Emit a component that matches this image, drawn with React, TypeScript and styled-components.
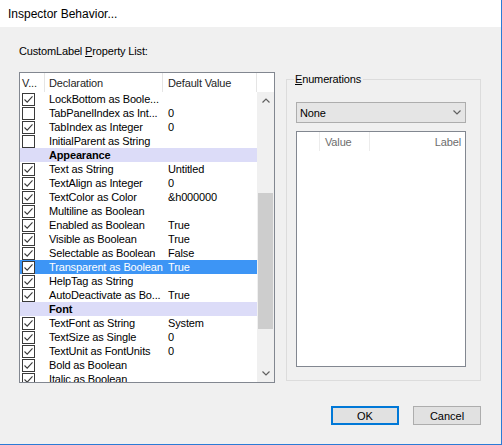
import styled, { createGlobalStyle } from "styled-components";

const GlobalStyle = createGlobalStyle`
  html, body {
    margin: 0;
    padding: 0;
    background: #f0f0f0;
  }
  * {
    box-sizing: border-box;
  }
`;

type Item = {
  kind: "item";
  checked: boolean;
  decl: string;
  value?: string;
  selected?: boolean;
};
type Section = { kind: "section"; title: string };
type Row = Item | Section;

const rows: Row[] = [
  { kind: "item", checked: true, decl: "LockBottom as Boole..." },
  { kind: "item", checked: false, decl: "TabPanelIndex as Int...", value: "0" },
  { kind: "item", checked: true, decl: "TabIndex as Integer", value: "0" },
  { kind: "item", checked: false, decl: "InitialParent as String" },
  { kind: "section", title: "Appearance" },
  { kind: "item", checked: true, decl: "Text as String", value: "Untitled" },
  { kind: "item", checked: true, decl: "TextAlign as Integer", value: "0" },
  { kind: "item", checked: true, decl: "TextColor as Color", value: "&h000000" },
  { kind: "item", checked: true, decl: "Multiline as Boolean" },
  { kind: "item", checked: true, decl: "Enabled as Boolean", value: "True" },
  { kind: "item", checked: true, decl: "Visible as Boolean", value: "True" },
  { kind: "item", checked: true, decl: "Selectable as Boolean", value: "False" },
  { kind: "item", checked: true, decl: "Transparent as Boolean", value: "True", selected: true },
  { kind: "item", checked: true, decl: "HelpTag as String" },
  { kind: "item", checked: true, decl: "AutoDeactivate as Bo...", value: "True" },
  { kind: "section", title: "Font" },
  { kind: "item", checked: true, decl: "TextFont as String", value: "System" },
  { kind: "item", checked: true, decl: "TextSize as Single", value: "0" },
  { kind: "item", checked: true, decl: "TextUnit as FontUnits", value: "0" },
  { kind: "item", checked: true, decl: "Bold as Boolean" },
  { kind: "item", checked: true, decl: "Italic as Boolean" },
];

const CheckBox = ({ checked }: { checked: boolean }) => (
  <Box>
    {checked && (
      <svg width="11" height="11" viewBox="0 0 11 11">
        <path d="M1.5 5.5 L4.2 8.2 L9.5 2.3" fill="none" stroke="#3a3a3a" strokeWidth="1.1" />
      </svg>
    )}
  </Box>
);

const Chevron = ({ up }: { up?: boolean }) => (
  <svg width="8" height="5" viewBox="0 0 8 5">
    <path
      d={up ? "M0.5 4.5 L4 1 L7.5 4.5" : "M0.5 0.5 L4 4 L7.5 0.5"}
      fill="none"
      stroke="#606060"
      strokeWidth="1.2"
    />
  </svg>
);

export default function App() {
  return (
    <>
      <GlobalStyle />
      <Window>
        <TitleBar>Inspector Behavior...</TitleBar>
        <Content>
          <Caption>
            CustomLabel <u>P</u>roperty List:
          </Caption>
          <MainRow>
            <ListBox>
              <HeaderRow>
                <HeadCell $w={25} $pad={2}>V...</HeadCell>
                <HeadCell $w={118} $pad={4}>Declaration</HeadCell>
                <HeadCell $w={94} $pad={5}>Default Value</HeadCell>
                <HeadCell $w={17} $pad={0} $last />
              </HeaderRow>
              <ListBody>
                <Rows>
                  {rows.map((r, i) =>
                    r.kind === "section" ? (
                      <SectionRow key={i}>{r.title}</SectionRow>
                    ) : (
                      <ItemRow key={i} $selected={!!r.selected}>
                        <CheckCell>
                          <CheckBox checked={r.checked} />
                        </CheckCell>
                        <DeclCell>{r.decl}</DeclCell>
                        <ValueCell>{r.value}</ValueCell>
                      </ItemRow>
                    )
                  )}
                </Rows>
                <ScrollBar>
                  <ArrowBox>
                    <Chevron up />
                  </ArrowBox>
                  <Track>
                    <Thumb $top={84} $height={136} />
                  </Track>
                  <ArrowBox>
                    <Chevron />
                  </ArrowBox>
                </ScrollBar>
              </ListBody>
            </ListBox>

            <Group>
              <Legend>
                <u>E</u>numerations
              </Legend>
              <Select>
                <span>None</span>
                <Chevron />
              </Select>
              <EnumList>
                <EnumHeader>
                  <EnumHead $w={23} />
                  <EnumHead $w={50} $pad="0 0 0 5px">
                    Value
                  </EnumHead>
                  <EnumHead $w={95} $pad="0 4px 0 0" $right $last>
                    Label
                  </EnumHead>
                </EnumHeader>
              </EnumList>
            </Group>
          </MainRow>
        </Content>
        <ButtonRow>
          <Button $default>OK</Button>
          <Button>Cancel</Button>
        </ButtonRow>
      </Window>
    </>
  );
}

const Window = styled.div`
  width: 502px;
  height: 445px;
  display: flex;
  flex-direction: column;
  background: #f0f0f0;
  border-right: 1px solid #2b7bd6;
  border-bottom: 1px solid #2b7bd6;
  font-family: "Liberation Sans", Arial, sans-serif;
  font-size: 11px;
  letter-spacing: -0.15px;
  color: #000;
`;

const TitleBar = styled.div`
  height: 27px;
  background: #fff;
  display: flex;
  align-items: center;
  padding: 1px 8px 0;
  font-size: 12px;
  letter-spacing: 0;
`;

const Content = styled.div`
  padding: 17px 0 0 19px;
  display: flex;
  flex-direction: column;
`;

const Caption = styled.div`
  height: 14px;
  line-height: 14px;
  margin-bottom: 14px;
  u {
    text-decoration-thickness: 1px;
    text-underline-offset: 1px;
  }
`;

const MainRow = styled.div`
  display: flex;
  gap: 11px;
  align-items: flex-start;
`;

const ListBox = styled.div`
  width: 256px;
  height: 311px;
  border: 1px solid #828790;
  background: #fff;
  display: flex;
  flex-direction: column;
  overflow: hidden;
`;

const HeaderRow = styled.div`
  height: 19px;
  display: flex;
  flex-shrink: 0;
`;

const HeadCell = styled.div<{ $w: number; $pad: number; $last?: boolean }>`
  width: ${(p) => p.$w}px;
  padding-left: ${(p) => p.$pad}px;
  border-right: ${(p) => (p.$last ? "none" : "1px solid #e5e5e5")};
  display: flex;
  align-items: center;
  white-space: nowrap;
  overflow: hidden;
  color: #1e1e1e;
`;

const ListBody = styled.div`
  flex: 1;
  display: flex;
  min-height: 0;
`;

const Rows = styled.div`
  width: 237px;
  overflow: hidden;
`;

const ItemRow = styled.div<{ $selected: boolean }>`
  height: 14px;
  display: flex;
  align-items: center;
  background: ${(p) => (p.$selected ? "#3d95f5" : "transparent")};
  color: ${(p) => (p.$selected ? "#fff" : "#000")};
  white-space: nowrap;
`;

const SectionRow = styled.div`
  height: 14px;
  line-height: 14px;
  padding-left: 29px;
  background: #dcdcf8;
  font-weight: bold;
`;

const CheckCell = styled.div`
  width: 25px;
  padding-left: 2px;
  display: flex;
  align-items: center;
`;

const Box = styled.div`
  width: 13px;
  height: 13px;
  border: 1px solid #3a3a3a;
  background: #fff;
  display: flex;
  align-items: center;
  justify-content: center;
`;

const DeclCell = styled.div`
  width: 118px;
  padding-left: 4px;
  overflow: hidden;
`;

const ValueCell = styled.div`
  flex: 1;
  padding-left: 5px;
  overflow: hidden;
`;

const ScrollBar = styled.div`
  width: 17px;
  background: #f0f0f0;
  display: flex;
  flex-direction: column;
`;

const ArrowBox = styled.div`
  height: 17px;
  display: flex;
  align-items: center;
  justify-content: center;
`;

const Track = styled.div`
  flex: 1;
  padding: 0 1px;
`;

const Thumb = styled.div<{ $top: number; $height: number }>`
  margin-top: ${(p) => p.$top}px;
  height: ${(p) => p.$height}px;
  background: #cdcdcd;
`;

const Group = styled.fieldset`
  margin: 0;
  width: 195px;
  height: 309px;
  border: 1px solid #dcdcdc;
  padding: 15px 14px 0 9px;
  display: flex;
  flex-direction: column;
`;

const Legend = styled.legend`
  padding: 0 2px 0 1px;
  margin-left: -2px;
  line-height: 15px;
  u {
    text-decoration-thickness: 1px;
    text-underline-offset: 1px;
  }
`;

const Select = styled.div`
  height: 21px;
  width: 170px;
  border: 1px solid #adadad;
  background: #e5e5e5;
  display: flex;
  align-items: center;
  justify-content: space-between;
  padding: 0 4px 0 3px;
`;

const EnumList = styled.div`
  margin-top: 8px;
  width: 170px;
  height: 236px;
  border: 1px solid #828790;
  background: #fff;
`;

const EnumHeader = styled.div`
  height: 19px;
  display: flex;
`;

const EnumHead = styled.div<{ $w: number; $pad?: string; $right?: boolean; $last?: boolean }>`
  width: ${(p) => p.$w}px;
  padding: ${(p) => p.$pad ?? "0"};
  border-right: ${(p) => (p.$last ? "none" : "1px solid #ececec")};
  display: flex;
  align-items: center;
  justify-content: ${(p) => (p.$right ? "flex-end" : "flex-start")};
  color: #6d6d6d;
`;

const ButtonRow = styled.div`
  display: flex;
  justify-content: flex-end;
  gap: 14px;
  padding: 23px 20px 0 0;
`;

const Button = styled.button<{ $default?: boolean }>`
  width: 68px;
  height: 19px;
  padding: 0;
  font-family: inherit;
  font-size: 11px;
  color: #000;
  background: #e1e1e1;
  border: ${(p) => (p.$default ? "2px solid #0078d7" : "1px solid #adadad")};
`;
